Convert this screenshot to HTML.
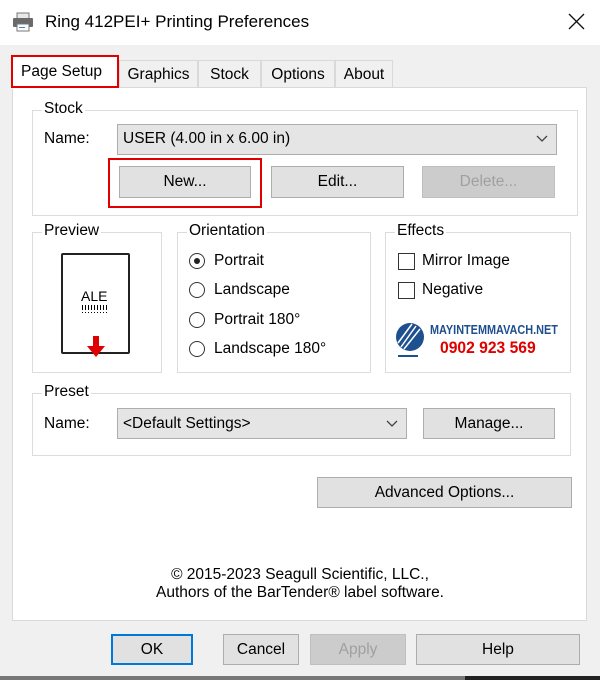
<!DOCTYPE html>
<html><head><style>
body{margin:0;width:600px;height:680px;overflow:hidden;background:#f0f0f0;font-family:"Liberation Sans",sans-serif;font-size:15px;color:#000;position:relative}
.a{position:absolute}
.btn{position:absolute;background:#e1e1e1;border:1px solid #adadad;box-sizing:border-box;text-align:center;font-size:15.5px}
.dis{color:#a0a0a0;background:#cccccc;border-color:#bfbfbf}
.grp{position:absolute;border:1px solid #dcdcdc;box-sizing:border-box}
.lg{position:absolute;background:#fff;padding:0 2px;font-size:15.5px;top:-11px;left:9px}
.tab{position:absolute;top:60px;height:27px;background:#f0f0f0;border:1px solid #d9d9d9;border-bottom:none;box-sizing:border-box;text-align:center;line-height:27px;font-size:15.5px}
.rad{position:absolute;width:16px;height:16px;border:1px solid #333;border-radius:50%;box-sizing:border-box;background:#fff}
.chk{position:absolute;width:17px;height:17px;border:1px solid #333;box-sizing:border-box;background:#fff}
.t{position:absolute;font-size:15.5px;white-space:nowrap}
</style></head><body>
<div class="a" style="left:0;top:0;width:600px;height:45px;background:#fff"></div>
<svg class="a" style="left:12px;top:12px" width="22" height="20" viewBox="0 0 22 20"><rect x="5" y="1" width="12" height="6" fill="#e8e8e8" stroke="#777"/><rect x="1" y="6" width="20" height="9" rx="1" fill="#6a6a6a"/><rect x="5" y="12" width="12" height="7" fill="#fff" stroke="#777"/><rect x="7" y="15" width="6" height="1" fill="#3a8ad8"/></svg>
<div class="t" style="left:45px;top:12px;font-size:17px">Ring 412PEI+ Printing Preferences</div>
<svg class="a" style="left:568px;top:13px" width="17" height="17"><path d="M1 1L16 16M16 1L1 16" stroke="#111" stroke-width="1.3"/></svg>

<div class="a" style="left:12px;top:87px;width:575px;height:534px;background:#fff;border:1px solid #d9d9d9;box-sizing:border-box"></div>
<div class="tab" style="left:119px;width:79px">Graphics</div>
<div class="tab" style="left:198px;width:63px">Stock</div>
<div class="tab" style="left:261px;width:74px">Options</div>
<div class="tab" style="left:335px;width:58px">About</div>
<div class="a" style="left:12px;top:56px;width:107px;height:33px;background:#fff"></div>
<div class="t" style="left:21px;top:63px">Page Setup</div>
<div class="a" style="left:11px;top:55px;width:108px;height:33px;border:2px solid #e00000;box-sizing:border-box"></div>

<div class="grp" style="left:32px;top:110px;width:546px;height:106px"><span class="lg">Stock</span></div>
<div class="t" style="left:44px;top:130px">Name:</div>
<div class="a" style="left:117px;top:124px;width:440px;height:31px;background:#e5e5e5;border:1px solid #adadad;box-sizing:border-box"></div>
<div class="t" style="left:123px;top:130px">USER (4.00 in x 6.00 in)</div>
<svg class="a" style="left:536px;top:135px" width="12" height="8"><path d="M1 1L6 6L11 1" fill="none" stroke="#444" stroke-width="1.3"/></svg>
<div class="btn" style="left:119px;top:166px;width:132px;height:32px;line-height:30px">New...</div>
<div class="btn" style="left:271px;top:166px;width:133px;height:32px;line-height:30px">Edit...</div>
<div class="btn dis" style="left:422px;top:166px;width:133px;height:32px;line-height:30px">Delete...</div>
<div class="a" style="left:108px;top:158px;width:154px;height:50px;border:2px solid #e00000;box-sizing:border-box"></div>

<div class="grp" style="left:32px;top:232px;width:130px;height:141px"><span class="lg">Preview</span></div>
<div class="a" style="left:61px;top:253px;width:69px;height:101px;border:2px solid #222;border-radius:2px;box-sizing:border-box;background:#fff"></div>
<div class="t" style="left:81px;top:288px;font-size:14px">ALE</div>
<div class="a" style="left:82px;top:305px;width:26px;height:5px;background:repeating-linear-gradient(90deg,#000 0 1px,#fff 1px 3px)"></div>
<div class="a" style="left:82px;top:312px;width:26px;height:1px;background:repeating-linear-gradient(90deg,#000 0 1px,#fff 1px 3px)"></div>
<svg class="a" style="left:86px;top:336px" width="20" height="22"><path d="M7 0H13V10H19L10 21L1 10H7Z" fill="#e00000"/></svg>

<div class="grp" style="left:177px;top:232px;width:194px;height:141px"><span class="lg">Orientation</span></div>
<div class="rad" style="left:189px;top:253px"></div><div class="a" style="left:194px;top:258px;width:6px;height:6px;border-radius:50%;background:#222"></div>
<div class="t" style="left:214px;top:252px">Portrait</div>
<div class="rad" style="left:189px;top:282px"></div><div class="t" style="left:214px;top:281px">Landscape</div>
<div class="rad" style="left:189px;top:312px"></div><div class="t" style="left:214px;top:311px">Portrait 180°</div>
<div class="rad" style="left:189px;top:341px"></div><div class="t" style="left:214px;top:340px">Landscape 180°</div>

<div class="grp" style="left:385px;top:232px;width:186px;height:141px"><span class="lg">Effects</span></div>
<div class="chk" style="left:398px;top:253px"></div><div class="t" style="left:422px;top:252px">Mirror Image</div>
<div class="chk" style="left:398px;top:282px"></div><div class="t" style="left:422px;top:281px">Negative</div>
<svg class="a" style="left:394px;top:321px" width="32" height="40"><circle cx="16" cy="16" r="14" fill="#1e4f8f"/><path d="M4 22L18 3M7 26L22 5M10 28L26 8" stroke="#fff" stroke-width="1.5"/><rect x="4" y="34" width="20" height="2" fill="#1e4f8f"/></svg>
<div class="t" style="left:430px;top:323px;font-size:12.5px;font-weight:bold;color:#1e4f8f;transform:scaleX(0.87);transform-origin:left top">MAYINTEMMAVACH.NET</div>
<div class="t" style="left:440px;top:338px;font-size:17px;font-weight:bold;color:#e00000;transform:scaleX(0.92);transform-origin:left top">0902 923 569</div>

<div class="grp" style="left:32px;top:393px;width:539px;height:63px"><span class="lg">Preset</span></div>
<div class="t" style="left:44px;top:415px">Name:</div>
<div class="a" style="left:117px;top:408px;width:290px;height:31px;background:#e5e5e5;border:1px solid #adadad;box-sizing:border-box"></div>
<div class="t" style="left:123px;top:415px">&lt;Default Settings&gt;</div>
<svg class="a" style="left:386px;top:420px" width="12" height="8"><path d="M1 1L6 6L11 1" fill="none" stroke="#444" stroke-width="1.3"/></svg>
<div class="btn" style="left:423px;top:408px;width:132px;height:31px;line-height:29px">Manage...</div>

<div class="btn" style="left:317px;top:477px;width:255px;height:31px;line-height:29px">Advanced Options...</div>

<div class="t" style="left:0;width:600px;text-align:center;top:566px">© 2015-2023 Seagull Scientific, LLC.,</div>
<div class="t" style="left:0;width:600px;text-align:center;top:584px">Authors of the BarTender® label software.</div>

<div class="btn" style="left:111px;top:634px;width:82px;height:31px;line-height:27px;border:2px solid #0078d7">OK</div>
<div class="btn" style="left:223px;top:634px;width:76px;height:31px;line-height:29px">Cancel</div>
<div class="btn dis" style="left:310px;top:634px;width:96px;height:31px;line-height:29px">Apply</div>
<div class="btn" style="left:416px;top:634px;width:164px;height:31px;line-height:29px">Help</div>
<div class="a" style="left:0;top:676px;width:600px;height:4px;background:#777"></div>
<div class="a" style="left:465px;top:676px;width:135px;height:4px;background:#222"></div>
</body></html>
